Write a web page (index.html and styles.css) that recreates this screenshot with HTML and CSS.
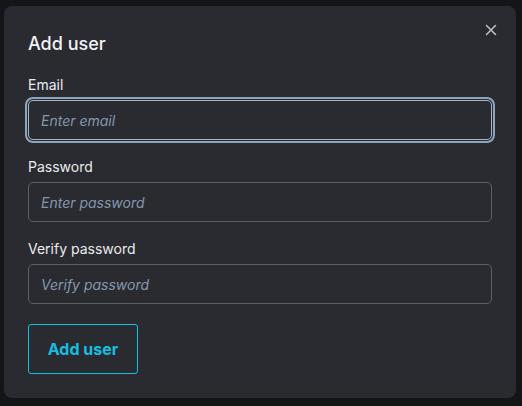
FILE: index.html
```html
<!DOCTYPE html>
<html>
<head>
<meta charset="utf-8">
<link rel="stylesheet" href="styles.css">
</head>
<body>
<div class="overlay">
  <div class="modal">
    <div class="header">
      <h2 class="title">Add user</h2>
      <button class="close" aria-label="Close">
        <svg width="12" height="12" viewBox="0 0 12 12"><path d="M1.5 1.5 L10.5 10.5 M10.5 1.5 L1.5 10.5" stroke="#c1c2c5" stroke-width="1.5" stroke-linecap="round"/></svg>
      </button>
    </div>
    <form class="form">
      <div class="field">
        <label class="label">Email</label>
        <input class="input focused" placeholder="Enter email">
      </div>
      <div class="field">
        <label class="label">Password</label>
        <input class="input" type="password" placeholder="Enter password">
      </div>
      <div class="field last">
        <label class="label">Verify password</label>
        <input class="input" type="password" placeholder="Verify password">
      </div>
      <button type="button" class="submit">Add user</button>
    </form>
  </div>
</div>
</body>
</html>
```
FILE: styles.css
```css
* { box-sizing: border-box; }
html, body { margin: 0; height: 100%; }
body {
  background: #141517;
  font-family: Inter, "Noto Sans", sans-serif;
  color: #e9ecef;
}
.overlay {
  padding: 6px 6px 0 4px;
}
.modal {
  width: 512px;
  height: 392px;
  background: #2a2b30;
  border-radius: 8px;
  padding: 20px 24px 24px 24px;
}
.header {
  display: flex;
  justify-content: space-between;
  align-items: flex-start;
  height: 36px;
  margin-bottom: 14px;
}
.title {
  margin: 0;
  font-size: 18px;
  line-height: 36px;
  font-weight: 500;
  color: #f1f3f5;
}
.close {
  background: none;
  border: none;
  padding: 0;
  margin-right: -12px;
  margin-top: -9px;
  width: 26px;
  height: 26px;
  display: flex;
  align-items: center;
  justify-content: center;
}
.form { display: flex; flex-direction: column; }
.field { display: flex; flex-direction: column; margin-bottom: 18px; }
.field.last { margin-bottom: 20px; }
.label {
  font-size: 14px;
  font-weight: 400;
  line-height: 18px;
  margin-bottom: 6px;
  color: #e9ecef;
}
.input {
  height: 40px;
  width: 464px;
  background: #2a2b30;
  border: 1px solid #5c5f66;
  border-radius: 5px;
  padding: 0 12px;
  font-family: Inter, sans-serif;
  font-size: 14px;
  color: #e9ecef;
}
.input::placeholder {
  color: #8597ae;
  font-style: italic;
}
.input.focused {
  border-color: #a5b6cb;
  outline: 2px solid #8fa4bd;
  outline-offset: 1px;
}
.submit {
  align-self: flex-start;
  height: 50px;
  width: 110px;
  background: transparent;
  border: 1px solid #15bfe0;
  border-radius: 3px;
  color: #15bfe0;
  font-family: Inter, sans-serif;
  font-size: 16px;
  font-weight: 700;
}
```
